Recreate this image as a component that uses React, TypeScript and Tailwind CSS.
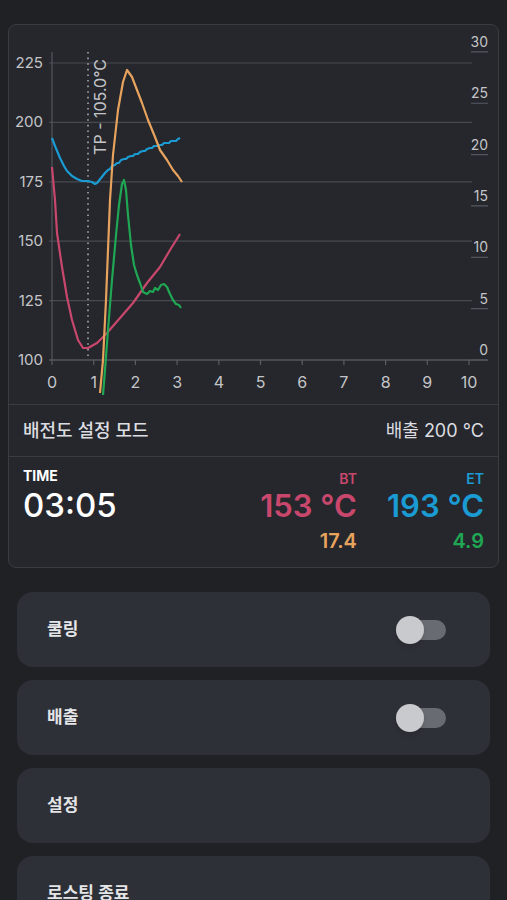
import React from "react";

const font = { fontFamily: "Inter, 'Noto Sans CJK KR', sans-serif" };

const bt = "52,167 55,200 57,233 62,267 67,297 72,320 78,340 83,348 88,348 97,343 107,333 120,318 133,303 147,283 160,267 170,250 180,234";
const et = "52,138 55,146 60,158 64,166 67,171 72,176 77,179 82,181 88,181 92,182 95,184 97,183 101,178 105,173 108,170 110,169 112,166 115,165 117,163 119,163 121,160 124,159 126,159 128,157 131,156 133,156 135,154 138,154 140,152 143,151 145,151 147,149 150,148 152,148 154,146 157,146 160,145 162,145 164,143 167,143 169,143 171,141 174,141 176,141 178,139 180,138";
const ror = "100,393 103,360 106,300 108,250 110,200 113,155 118,110 123,82 127,70 132,77 137,90 142,103 148,120 155,137 160,150 167,160 173,170 178,176 182,182";
const etRor = "103,395 105,370 108,330 112,280 116,235 119,205 122,184 124,180 126,190 128,215 131,245 134,265 137,275 140,283 143,292 147,294 150,291 153,292 155,288 158,290 161,285 164,284 167,287 170,294 173,300 176,304 179,305 181,308";

function Chart() {
  const leftTicks = [225, 200, 175, 150, 125, 100];
  const rightTicks = [30, 25, 20, 15, 10, 5, 0];
  const xs = [0, 1, 2, 3, 4, 5, 6, 7, 8, 9, 10];
  const ly = (v: number) => 360 - (v - 100) * 2.376;
  const ry = (v: number) => 360 - v * 10.27;
  const tx = (t: number) => 52 + t * 41.7;

  return (
    <svg width="489" height="379" viewBox="9 25 489 379" className="block" style={font}>
      {leftTicks.map((v) => (
        <g key={v}>
          <line x1="49" x2="472" y1={ly(v)} y2={ly(v)} stroke="#474a50" strokeWidth="1.2" />
          <text x="43" y={ly(v) + 5} textAnchor="end" fontSize="15" fill="#c4c5c8">{v}</text>
        </g>
      ))}
      {rightTicks.map((v) => (
        <g key={v}>
          <line x1="471" x2="488" y1={ry(v)} y2={ry(v)} stroke="#555860" strokeWidth="1.2" />
          <text x="488" y={ry(v) - 5} textAnchor="end" fontSize="14" fill="#c4c5c8">{v}</text>
        </g>
      ))}
      <line x1="52" x2="52" y1="52" y2="360" stroke="#555860" strokeWidth="1.2" />
      <line x1="49" x2="488" y1="360" y2="360" stroke="#5a5d64" strokeWidth="1.2" />
      {xs.map((t) => (
        <g key={t}>
          <line x1={tx(t)} x2={tx(t)} y1="360" y2="365" stroke="#5a5d64" strokeWidth="1.2" />
          <text x={tx(t)} y="388" textAnchor="middle" fontSize="16" fill="#c4c5c8">{t}</text>
        </g>
      ))}
      <line x1="88" x2="88" y1="52" y2="360" stroke="#a5a7ab" strokeWidth="1.6" strokeDasharray="1.6 4" />
      <text transform="translate(106,59) rotate(-90)" textAnchor="end" fontSize="16" fill="#c4c5c8">TP - 105.0°C</text>
      <polyline points={bt} fill="none" stroke="#c9476c" strokeWidth="2.2" strokeLinejoin="round" />
      <polyline points={et} fill="none" stroke="#1b9bd3" strokeWidth="2.2" strokeLinejoin="round" />
      <polyline points={ror} fill="none" stroke="#e7a35e" strokeWidth="2.2" strokeLinejoin="round" />
      <polyline points={etRor} fill="none" stroke="#1fa754" strokeWidth="2.2" strokeLinejoin="round" />
    </svg>
  );
}

function Toggle() {
  return (
    <div className="relative h-[28px] w-[50px]">
      <div className="absolute left-[4px] top-[4px] h-[20px] w-[46px] rounded-full bg-[#686b71]" />
      <div className="absolute left-0 top-0 h-[28px] w-[28px] rounded-full bg-[#c9cacd] shadow-md" />
    </div>
  );
}

function MenuCard({ label, toggle }: { label: string; toggle?: boolean }) {
  return (
    <div className="flex h-[75px] items-center justify-between rounded-2xl bg-[#2e3038] pl-[30px] pr-[44px]">
      <span className="text-[17px] font-semibold text-[#e4e5e7]">{label}</span>
      {toggle && <Toggle />}
    </div>
  );
}

export default function App() {
  return (
    <div className="min-h-[900px] bg-[#1f2125] pt-6" style={font}>
      <div className="mx-2 overflow-hidden rounded-lg border border-[#3a3c42] bg-[#25272c]">
        <Chart />
        <div className="flex h-[53px] items-center justify-between border-y border-[#3a3c42] px-[14px] text-[18px] text-[#dcdde0]">
          <span className="font-medium">배전도 설정 모드</span>
          <span>배출 200 °C</span>
        </div>
        <div className="flex justify-between px-[14px] pb-[14px] pt-[9px]">
          <div>
            <div className="text-[14px] font-bold leading-[20px] text-white">TIME</div>
            <div className="text-[33px] font-medium leading-[38px] text-white">03:05</div>
          </div>
          <div className="flex gap-[30px] pt-[3px] text-right">
            <div>
              <div className="text-[14px] font-semibold leading-[20px] text-[#c9476c]">BT</div>
              <div className="text-[31px] font-semibold leading-[34px] text-[#c9476c]">153 °C</div>
              <div className="mt-[6px] text-[20px] font-semibold leading-[24px] text-[#e7a35e]">17.4</div>
            </div>
            <div>
              <div className="text-[14px] font-semibold leading-[20px] text-[#1b9bd3]">ET</div>
              <div className="text-[31px] font-semibold leading-[34px] text-[#1b9bd3]">193 °C</div>
              <div className="mt-[6px] text-[20px] font-semibold leading-[24px] text-[#1fa754]">4.9</div>
            </div>
          </div>
        </div>
      </div>
      <div className="mx-[17px] mt-6 flex flex-col gap-[13px]">
        <MenuCard label="쿨링" toggle />
        <MenuCard label="배출" toggle />
        <MenuCard label="설정" />
        <MenuCard label="로스팅 종료" />
      </div>
    </div>
  );
}
